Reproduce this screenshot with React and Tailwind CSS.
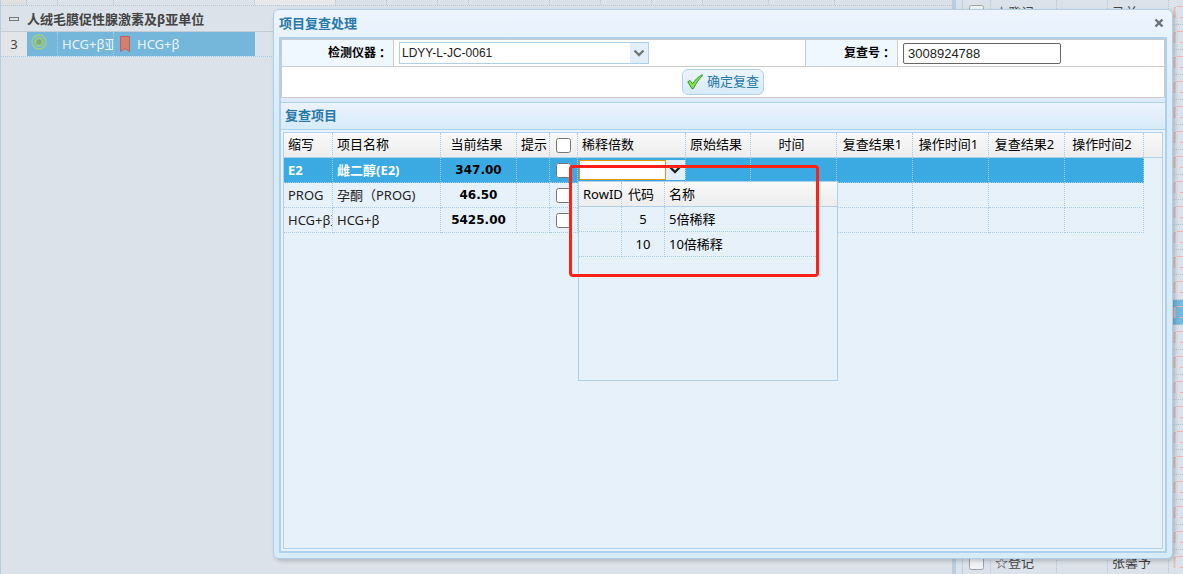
import { useState } from 'react'

const columns = [
  { title: '缩写', width: 'w-[49px]' },
  { title: '项目名称', width: 'w-[108px]' },
  { title: '当前结果', width: 'w-[76px]', center: true },
  { title: '提示', width: 'w-[33px]' },
  { title: 'check', width: 'w-[28px]' },
  { title: '稀释倍数', width: 'w-[108px]' },
  { title: '原始结果', width: 'w-[65px]' },
  { title: '时间', width: 'w-[86px]', center: true },
  { title: '复查结果1', width: 'w-[76px]', center: true },
  { title: '操作时间1', width: 'w-[76px]', center: true },
  { title: '复查结果2', width: 'w-[76px]', center: true },
  { title: '操作时间2', width: 'w-[79px]', center: true },
]

const rows = [
  { code: 'E2', name: '雌二醇(E2)', result: '347.00' },
  { code: 'PROG', name: '孕酮（PROG)', result: '46.50' },
  { code: 'HCG+β亚', name: 'HCG+β', result: '5425.00' },
]

const dilutions = [
  { code: '5', name: '5倍稀释' },
  { code: '10', name: '10倍稀释' },
]

const patients = Array.from({ length: 23 }, () => ({}))
patients[0] = { status: '☆登记', name: '马兰' }
patients[22] = { status: '☆登记', name: '张馨予' }

const cell = 'h-[25px] p-0 border-r border-b border-dotted border-[#a6cbe8] font-normal'
const headCell = 'h-6 p-0 border-r border-dotted border-[#a6cbe8] font-normal'
const patientCell = 'h-[25px] p-0 border-r border-b border-dotted border-[#b3c6d6]'
const stripCell = 'border-r border-dotted border-[#b3c6d6]'

function Chevron({ className }) {
  return (
    <svg viewBox="0 0 12 8" className={className} fill="none" stroke="currentColor" strokeWidth="2.4" aria-hidden="true">
      <path d="M1.5 1.5 6 6l4.5-4.5" />
    </svg>
  )
}

function CheckIcon() {
  return (
    <svg viewBox="0 0 16 16" className="size-4 shrink-0" aria-hidden="true">
      <path d="M.8 7.8 3 6.4l2.6 3.4C8 6 11.2 2.8 15.2.8l.4.8C12.1 4.8 9 9.2 6.4 14.6H4.8Z" fill="#8ee04a" stroke="#2f9a2a" strokeLinejoin="round" />
    </svg>
  )
}

function DilutionPicker() {
  return (
    <div className="relative h-6">
      <div className="flex h-6 items-center pl-px">
        <input aria-label="稀释倍数" className="h-5 w-[87px] border border-[#e59700] bg-white px-1 outline-none" />
        <button aria-label="展开" className="flex h-5 flex-1 items-center justify-center bg-[#e2eef9] pr-0.5 text-[#222]">
          <Chevron className="h-2 w-3" />
        </button>
      </div>
      <div className="absolute top-[23px] left-0 z-10 h-[200px] w-[260px] border border-[#aed0ea] bg-[#e7f1fa] text-black">
        <div className="h-[25px] border-b border-[#aed0ea] bg-linear-to-b from-[#f9f9f9] to-[#ededed]" />
        <table className="-mt-[25px] w-[239px] table-fixed border-separate border-spacing-0">
          <thead>
            <tr>
              <th className={`${headCell} w-[43px] pl-1 text-left`}>RowID</th>
              <th className={`${headCell} w-[43px]`}>
                <div className="pr-1">代码</div>
              </th>
              <th className={`${headCell} border-r-0 pl-1 text-left`}>名称</th>
            </tr>
          </thead>
          <tbody>
            <tr className="h-px" />
            {dilutions.map((d) => (
              <tr key={d.code}>
                <td className={cell} />
                <td className={`${cell} text-center`}>{d.code}</td>
                <td className={`${cell} pl-1`}>{d.name}</td>
              </tr>
            ))}
          </tbody>
        </table>
      </div>
      <div className="pointer-events-none absolute top-[7px] -left-[9px] z-20 h-[112px] w-[250px] rounded-sm border-3 border-[#ff2116]" />
    </div>
  )
}

function ResultGrid() {
  const [selected, setSelected] = useState(0)
  return (
    <div className="flex-1 border border-[#aed0ea] bg-[#e7f1fa]">
      <div className="h-[25px] border-b border-[#aed0ea] bg-linear-to-b from-[#f9f9f9] to-[#ededed]" />
      <table className="-mt-[25px] w-[860px] table-fixed border-separate border-spacing-0 text-[13px] leading-5">
        <thead>
          <tr>
            {columns.map((c) => (
              <th key={c.title} className={`${headCell} ${c.width} ${c.center ? 'text-center' : 'text-left'}`}>
                {c.title === 'check' ? (
                  <input type="checkbox" aria-label="全选" className="mx-auto block size-[15px]" />
                ) : (
                  <div className={`overflow-hidden pb-0.5 whitespace-nowrap ${c.center ? 'pr-1' : 'pl-1'}`}>{c.title}</div>
                )}
              </th>
            ))}
          </tr>
        </thead>
        <tbody>
          <tr className="h-px" />
          {rows.map((r, i) => (
            <tr
              key={r.code}
              onClick={() => setSelected(i)}
              className={i === selected ? 'bg-[#3baae3] text-white font-bold' : 'text-[#222]'}
            >
              <td className="h-[25px] border-r border-b border-dotted border-[#a6cbe8] p-0">
                <div className="overflow-hidden pl-1 whitespace-nowrap">{r.code}</div>
              </td>
              <td className="h-[25px] border-r border-b border-dotted border-[#a6cbe8] p-0">
                <div className="overflow-hidden pl-1 whitespace-nowrap">{r.name}</div>
              </td>
              <td className="h-[25px] border-r border-b border-dotted border-[#a6cbe8] p-0 text-center font-['DejaVu_Sans',sans-serif] text-xs font-bold text-black">
                {r.result}
              </td>
              <td className={cell} />
              <td className={cell}>
                <input type="checkbox" aria-label={`选择 ${r.code}`} className="mx-auto block size-[15px]" />
              </td>
              <td className={cell}>{i === 0 && <DilutionPicker />}</td>
              {columns.slice(6).map((c) => (
                <td key={c.title} className={cell} />
              ))}
            </tr>
          ))}
        </tbody>
      </table>
    </div>
  )
}

function RecheckDialog() {
  return (
    <section
      role="dialog"
      aria-labelledby="dialog-title"
      className="absolute top-[9px] right-[10px] bottom-[15px] left-[273px] flex flex-col rounded-md border border-[#aed0ea] bg-linear-to-b from-[#edf4fe] to-[#d7ebf9] to-20% px-[5px] pb-[5px] shadow-[2px_2px_4px_rgba(0,0,0,0.2)]"
    >
      <header className="flex h-[27px] items-center justify-between pb-0.5">
        <h1 id="dialog-title" className="text-[13px] font-bold text-[#2779aa]">项目复查处理</h1>
        <button aria-label="关闭" className="flex size-4 items-center justify-center text-[#6b7079]">
          <svg viewBox="0 0 10 10" className="size-[10px]" stroke="currentColor" strokeWidth="2.4" aria-hidden="true">
            <path d="m1.5 1.5 7 7m0-7-7 7" />
          </svg>
        </button>
      </header>

      <div className="flex flex-1 flex-col border-2 border-[#aed0ea] bg-[#e0ecfb]">
        <form className="mb-1 border border-[#ccc] bg-white text-xs" onSubmit={(e) => e.preventDefault()}>
          <div className="flex h-[27px] border-b border-[#ccc]">
            <label htmlFor="device" className="flex w-28 items-center justify-end border-r border-[#ccc] bg-[#eff7ff] pr-[5px] font-bold">
              检测仪器<span className="font-['Noto_Sans_CJK_TC',sans-serif]">：</span>
            </label>
            <div className="flex flex-1 items-center pl-[5px]">
              <div className="relative">
                <select
                  id="device"
                  className="h-[22px] w-[250px] appearance-none border border-[#aed0ea] bg-white pl-0.5 font-['Liberation_Sans',sans-serif] text-xs text-[#222]"
                >
                  <option>LDYY-L-JC-0061</option>
                </select>
                <span className="pointer-events-none absolute inset-y-px right-px flex w-[18px] items-center justify-center bg-[#e2eef9] text-[#777]">
                  <Chevron className="h-2 w-3" />
                </span>
              </div>
            </div>
            <label htmlFor="recheck" className="flex w-[93px] items-center justify-end border-x border-[#ccc] bg-[#eff7ff] pr-[5px] font-bold">
              复查号<span className="font-['Noto_Sans_CJK_TC',sans-serif]">：</span>
            </label>
            <div className="flex w-[266px] items-center pl-[5px]">
              <input
                id="recheck"
                defaultValue="3008924788"
                className="h-[21px] w-[158px] rounded-xs border border-[#666] bg-white px-1 font-['Liberation_Sans',sans-serif] text-[13px] text-[#222]"
              />
            </div>
          </div>
          <div className="flex h-[30px] items-center justify-center">
            <button className="flex h-[26px] w-[82px] items-center justify-center gap-1 rounded-md border border-[#aed0ea] bg-linear-to-b from-[#edf4fb] to-[#d7ebf9] text-[13px] text-[#2779aa]">
              <CheckIcon />
              确定复查
            </button>
          </div>
        </form>

        <h2 className="flex h-7 items-center border-y border-[#aed0ea] bg-linear-to-b from-[#ecf3fd] to-[#d7ebf9] pb-0.5 pl-1 text-[13px] font-bold text-[#2779aa]">
          复查项目
        </h2>
        <div className="flex flex-1 flex-col bg-[#e9f3fc] p-0.5">
          <ResultGrid />
        </div>
      </div>
    </section>
  )
}

function GroupList() {
  return (
    <div className="min-w-0 flex-1 border-l border-[#b5cfe2] text-[13px] text-[#444]">
      <div className="flex h-1.5 overflow-hidden border-b border-dotted border-[#b3c6d6] *:shrink-0">
        <span className={`${stripCell} w-[26px] bg-[#e0e0e0]`} />
        <span className={`${stripCell} w-[31px]`} />
        <span className={`${stripCell} w-14`} />
        <span className={`${stripCell} w-[141px]`} />
        <span className={`${stripCell} w-[81px] bg-[#e8e8e8]`} />
        <span className={`${stripCell} w-[51px]`} />
        <span className={`${stripCell} w-[51px]`} />
        <span className={`${stripCell} w-[31px]`} />
        <span className={`${stripCell} w-[81px]`} />
        <span className={`${stripCell} w-[51px]`} />
        <span className={`${stripCell} w-[51px]`} />
        <span className={`${stripCell} w-[51px]`} />
        <span className={`${stripCell} w-[66px]`} />
        <span className={`${stripCell} w-[66px]`} />
      </div>
      <div className="flex h-[26px] items-center border-b border-[#c5cbd2] pl-2">
        <span className="h-1 w-[10px] border border-[#777]" />
        <h2 className="ml-2 font-bold">人绒毛膜促性腺激素及β亚单位</h2>
      </div>
      <div className="flex h-[25px] border-b border-dotted border-[#a9c8dd]">
        <div className="flex w-[26px] items-center justify-center bg-[#e4e5e6]">3</div>
        <div className="flex w-[228px] bg-[#74b7db] text-[#eef5fa]">
          <div className="w-[31px] border-r border-dotted border-[#a9cfe5] pt-0.5 pl-1">
            <svg viewBox="0 0 16 16" className="size-4" fill="none" stroke="#a3cc7c" strokeWidth="1.5" aria-hidden="true">
              <circle cx="8" cy="8" r="7" />
              <circle cx="8" cy="8" r="4" fill="#8fb982" />
              <circle cx="8" cy="8" r="1.5" stroke="#7da773" />
            </svg>
          </div>
          <div className="flex w-14 items-center overflow-hidden border-r border-dotted border-[#a9cfe5] pl-1 whitespace-nowrap">HCG+β亚</div>
          <div className="flex items-center gap-[7px] pl-1.5">
            <svg viewBox="0 0 10 16" className="h-4 w-[10px]" fill="#d57f72" stroke="#c06058" aria-hidden="true">
              <path d="M.5.5h9v15L5 12.5.5 15.5Z" />
            </svg>
            HCG+β
          </div>
        </div>
      </div>
    </div>
  )
}

function PatientList() {
  return (
    <div className="w-[231px] overflow-hidden border-l-4 border-[#b9cfdf] pl-1.5 text-[13px] text-[#444]">
      <table className="w-full table-fixed border-separate border-spacing-0 border-l border-[#b5cfe2]">
        <tbody>
          {patients.map((p, i) => (
            <tr key={i} className={i === 12 ? 'bg-[#74b7db]' : ''}>
              <td className={`${patientCell} w-7`}>
                <input type="checkbox" aria-label={`选择第${i + 1}行`} className="mx-auto block size-[15px] opacity-60" />
              </td>
              <td className={`${patientCell} w-[66px]`}>
                <div className="pl-1">{p.status}</div>
              </td>
              <td className={`${patientCell} w-[51px]`} />
              <td className={`${patientCell} w-[61px]`}>
                <div className="pl-1">{p.name}</div>
              </td>
              <td className="border-b border-dotted border-[#b3c6d6] p-0">
                <svg viewBox="0 0 10 16" className="ml-1 h-4 w-[10px]" fill="none" aria-hidden="true">
                  <path d="M1.5 14V4" stroke="#e6c0b8" strokeWidth="2" />
                  <path d="M1 3.5h2M4 2.5h6M7 13.5h3" stroke="#efb3b1" />
                </svg>
              </td>
            </tr>
          ))}
        </tbody>
      </table>
    </div>
  )
}

export default function App() {
  return (
    <div className="relative flex h-screen overflow-hidden bg-[#dbe2e9] font-['Noto_Sans','Noto_Sans_CJK_SC',sans-serif] leading-5">
      <GroupList />
      <PatientList />
      <RecheckDialog />
    </div>
  )
}
